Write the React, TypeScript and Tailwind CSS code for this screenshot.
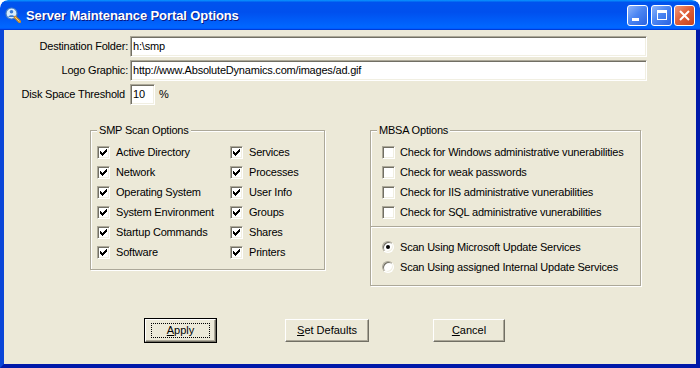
import type { ReactNode } from "react";

const smpLeft = ["Active Directory", "Network", "Operating System", "System Environment", "Startup Commands", "Software"];
const smpRight = ["Services", "Processes", "User Info", "Groups", "Shares", "Printers"];
const mbsa = [
  "Check for Windows administrative vunerabilities",
  "Check for weak passwords",
  "Check for IIS administrative vunerabilities",
  "Check for SQL administrative vunerabilities",
];

const checkPixels = ["......X", ".....XX", "X...XXX", "XX.XXX.", "XXXXX..", ".XXX...", "..X...."];

function CheckMark() {
  return (
    <svg width="7" height="7" viewBox="0 0 7 7" shapeRendering="crispEdges">
      {checkPixels.flatMap((row, y) =>
        row.split("").map((c, x) => (c === "X" ? <rect key={`${x}-${y}`} x={x} y={y} width="1" height="1" fill="#000" /> : null)),
      )}
    </svg>
  );
}

function CheckBox({ checked }: { checked: boolean }) {
  return (
    <span className="flex h-[13px] w-[13px] shrink-0 items-center justify-center border border-t-[#ACA899] border-l-[#ACA899] border-b-white border-r-white bg-white shadow-[inset_1px_1px_0_#716F64,inset_-1px_-1px_0_#F1EFE2]">
      {checked && <CheckMark />}
    </span>
  );
}

function Radio({ selected }: { selected: boolean }) {
  return (
    <span className="flex h-[12px] w-[12px] shrink-0 items-center justify-center rounded-full border border-t-[#ACA899] border-l-[#ACA899] border-b-white border-r-white bg-white shadow-[inset_1px_1px_0_#716F64,inset_-1px_-1px_0_#F1EFE2]">
      {selected && <span className="h-[4px] w-[4px] rounded-full bg-black" />}
    </span>
  );
}

function Field({ value, className }: { value: string; className: string }) {
  return (
    <div
      className={`flex h-[21px] items-center border border-t-[#ACA899] border-l-[#ACA899] border-b-white border-r-white bg-white pl-[2px] shadow-[inset_1px_1px_0_#716F64,inset_-1px_-1px_0_#F1EFE2] ${className}`}
    >
      {value}
    </div>
  );
}

function GroupBox({ title, className, children }: { title: string; className: string; children: ReactNode }) {
  return (
    <div className={`border border-[#ACA899] shadow-[inset_1px_1px_0_#fff,1px_1px_0_#fff] ${className}`}>
      <span className="-mt-[7px] ml-[6px] block w-fit bg-[#ECE9D8] px-[2px] leading-[13px]">{title}</span>
      {children}
    </div>
  );
}

function Button({ width, isDefault, children }: { width: string; isDefault?: boolean; children: ReactNode }) {
  const face =
    "flex h-[23px] items-center justify-center border border-t-white border-l-white border-r-[#716F64] border-b-[#716F64] bg-[#ECE9D8] shadow-[inset_-1px_-1px_0_#ACA899]";
  if (isDefault) {
    return (
      <div className="border border-black">
        <div className={`${face} ${width} px-[5px] py-[3px]`}>
          <span className="flex h-full flex-1 items-center justify-center border border-dotted border-black">{children}</span>
        </div>
      </div>
    );
  }
  return <div className={`${face} ${width}`}>{children}</div>;
}

function TitleIcon() {
  return (
    <svg width="16" height="16" viewBox="0 0 16 16">
      <circle cx="6.5" cy="6.5" r="5.5" fill="#D8EEFF" stroke="#4A7FC0" strokeWidth="1.2" />
      <circle cx="6.5" cy="4.8" r="1.8" fill="#3A7BD5" />
      <path d="M3.3 10 C3.6 7.6 9.4 7.6 9.7 10 Z" fill="#3A7BD5" />
      <path d="M10.2 10.2 L14.6 14.6" stroke="#C98A2A" strokeWidth="3" strokeLinecap="round" />
      <path d="M10.4 10.4 L14.2 14.2" stroke="#F5D27A" strokeWidth="1" strokeLinecap="round" />
    </svg>
  );
}

function CaptionButton({ kind }: { kind: "min" | "max" | "close" }) {
  const bg =
    kind === "close"
      ? "bg-[linear-gradient(135deg,#F09A7C,#E0603A_45%,#C8421E)]"
      : "bg-[linear-gradient(135deg,#8DB4FB,#4C86F2_45%,#2A63E2)]";
  return (
    <div className={`relative flex h-[21px] w-[21px] items-center justify-center rounded-[3px] border border-white ${bg}`}>
      {kind === "min" && <span className="absolute bottom-[4px] left-[4px] h-[3px] w-[7px] bg-white" />}
      {kind === "max" && <span className="h-[10px] w-[10px] border border-t-[3px] border-white" />}
      {kind === "close" && (
        <svg width="11" height="11" viewBox="0 0 11 11">
          <path d="M1 1 L10 10 M10 1 L1 10" stroke="#fff" strokeWidth="2" />
        </svg>
      )}
    </div>
  );
}

export default function App() {
  return (
    <div className="flex h-[368px] w-[700px] flex-col overflow-hidden rounded-t-[8px] bg-white font-['Liberation_Sans',Arial,sans-serif] text-[11px] leading-[13px] text-black">
      <div className="flex h-[30px] shrink-0 items-center rounded-t-[8px] bg-[linear-gradient(180deg,#0997ff,#0053ee_8%,#0050ee_40%,#0066ff_88%,#0066ff_93%,#005bff_95%,#003dd7_96%,#003dd7)] pl-[5px] pr-[5px]">
        <TitleIcon />
        <span className="ml-[5px] flex-1 text-[13px] font-bold tracking-[-0.1px] text-white [text-shadow:1px_1px_0_#0A1883]">
          Server Maintenance Portal Options
        </span>
        <div className="flex items-center">
          <CaptionButton kind="min" />
          <div className="ml-[3px]">
            <CaptionButton kind="max" />
          </div>
          <div className="ml-[2px]">
            <CaptionButton kind="close" />
          </div>
        </div>
      </div>

      <div className="flex flex-1 flex-col border-b-[4px] border-l-[4px] border-r-[4px] border-b-[#0019A9] border-l-[#0A46D8] border-r-[#0019A9] bg-[#ECE9D8] pt-[6px] tracking-[-0.2px]">
        <div className="flex items-center">
          <span className="w-[124px] text-right">Destination Folder:</span>
          <Field value="h:\smp" className="ml-[2px] w-[517px]" />
        </div>
        <div className="mt-[3px] flex items-center">
          <span className="w-[124px] text-right">Logo Graphic:</span>
          <Field value="http://www.AbsoluteDynamics.com/images/ad.gif" className="ml-[2px] w-[517px]" />
        </div>
        <div className="mt-[3px] flex items-center">
          <span className="w-[124px] pr-[3px] text-right">Disk Space Threshold</span>
          <Field value="10" className="ml-[2px] w-[25px]" />
          <span className="ml-[4px]">%</span>
        </div>

        <div className="mt-[25px] flex items-start pl-[86px]">
          <GroupBox title="SMP Scan Options" className="w-[235px] pb-[7px]">
            <div className="mt-[5px] grid grid-cols-[133px_1fr] pl-[6px]">
              {smpLeft.map((label, i) => (
                <div key={label} className="contents">
                  <div className="flex h-[20px] items-center gap-[6px]">
                    <CheckBox checked />
                    <span>{label}</span>
                  </div>
                  <div className="flex h-[20px] items-center gap-[6px]">
                    <CheckBox checked />
                    <span>{smpRight[i]}</span>
                  </div>
                </div>
              ))}
            </div>
          </GroupBox>

          <GroupBox title="MBSA Options" className="ml-[45px] w-[271px] pb-[8px]">
            <div className="mt-[5px] pl-[11px]">
              {mbsa.map((label) => (
                <div key={label} className="flex h-[20px] items-center gap-[5px]">
                  <CheckBox checked={false} />
                  <span>{label}</span>
                </div>
              ))}
            </div>
            <div className="mt-[4px] h-[2px] border-t border-t-[#ACA899] bg-white" />
            <div className="mt-[9px] pl-[11px]">
              <div className="flex h-[20px] items-center gap-[6px]">
                <Radio selected />
                <span>Scan Using Microsoft Update Services</span>
              </div>
              <div className="flex h-[20px] items-center gap-[6px]">
                <Radio selected={false} />
                <span>Scan Using assigned Internal Update Services</span>
              </div>
            </div>
          </GroupBox>
        </div>

        <div className="mt-[32px] flex items-center pl-[140px] tracking-normal">
          <Button width="w-[71px]" isDefault>
            <span className="underline">A</span>pply
          </Button>
          <div className="ml-[68px]">
            <Button width="w-[84px]">
              <span className="underline">S</span>et Defaults
            </Button>
          </div>
          <div className="ml-[64px]">
            <Button width="w-[72px]">
              <span className="underline">C</span>ancel
            </Button>
          </div>
        </div>
      </div>
    </div>
  );
}
